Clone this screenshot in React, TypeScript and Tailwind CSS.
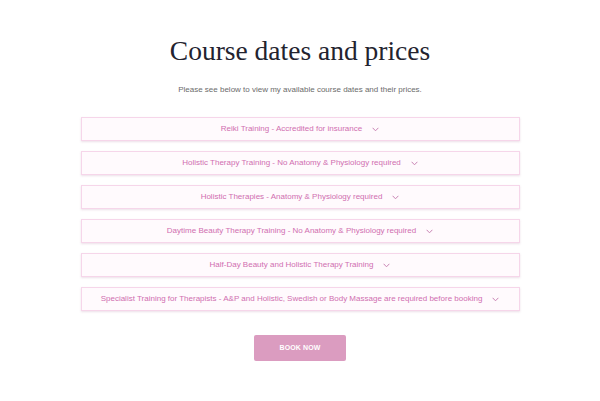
import React from "react";

const items = [
  "Reiki Training - Accredited for insurance",
  "Holistic Therapy Training - No Anatomy & Physiology required",
  "Holistic Therapies - Anatomy & Physiology required",
  "Daytime Beauty Therapy Training - No Anatomy & Physiology required",
  "Half-Day Beauty and Holistic Therapy Training",
  "Specialist Training for Therapists - A&P and Holistic, Swedish or Body Massage are required before booking",
];

function Chevron() {
  return (
    <svg width="7" height="5" viewBox="0 0 7 5" className="ml-[10px]">
      <path d="M0.6 0.8 L3.5 3.8 L6.4 0.8" fill="none" stroke="#c884b4" strokeWidth="1" />
    </svg>
  );
}

export default function App() {
  return (
    <div className="w-[600px] h-[401px] bg-white flex flex-col items-center" style={{ fontFamily: '"Liberation Sans", Arial, sans-serif' }}>
      <h1 className="mt-[34px] text-[27.5px] leading-[33px] text-[#23232f]" style={{ fontFamily: '"Liberation Serif", "Times New Roman", serif' }}>
        Course dates and prices
      </h1>
      <p className="mt-[18px] text-[8px] leading-[10px] text-[#6b6b6b]">
        Please see below to view my available course dates and their prices.
      </p>
      <div className="mt-[22px] w-[439px] flex flex-col gap-[10px]">
        {items.map((t) => (
          <div
            key={t}
            className="h-[24px] bg-[#fffafd] border border-[#f6d6ea] shadow-[0_1px_2px_rgba(200,160,185,0.35)] flex items-center justify-center text-[8px] text-[#d06eb0]"
          >
            <span>{t}</span>
            <Chevron />
          </div>
        ))}
      </div>
      <button className="mt-[24px] w-[92px] h-[26px] bg-[#db9cc0] rounded-[2px] text-white text-[7px] font-bold tracking-[0.1px]">
        BOOK NOW
      </button>
    </div>
  );
}
